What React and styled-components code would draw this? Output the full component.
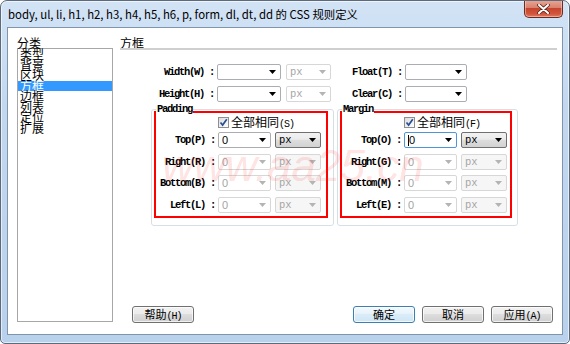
import React from "react";
import styled, { createGlobalStyle } from "styled-components";

const CJK = `"Noto Sans CJK SC", "Liberation Sans", sans-serif`;
const MONO = `"Liberation Mono", "Noto Sans CJK SC", monospace`;

const GlobalStyle = createGlobalStyle`
  html, body { margin: 0; padding: 0; background: #fff; }
  #root { width: 570px; height: 344px; }
`;

const categories = ["类型", "背景", "区块", "方框", "边框", "列表", "定位", "扩展"];

const Arrow = ({ off }) => (
  <svg width="7" height="4" viewBox="0 0 7 4" style={{ marginLeft: "auto", flex: "none" }}>
    <polygon points="0,0 7,0 3.5,4" fill={off ? "#b4b4b4" : "#000"} />
  </svg>
);

const Select = ({ w, ml, value, unit, off, btn, focus }) => (
  <Combo $w={w} $ml={ml} $off={off} $btn={btn} $focus={focus}>
    {focus && <Caret />}
    {unit ? <UnitText>{value}</UnitText> : <ValueText>{value}</ValueText>}
    <Arrow off={off} />
  </Combo>
);

const BoxGroup = ({ legend, hotkey, w, rows }) => (
  <Group $w={w}>
    <Legend>{legend}</Legend>
    <RedBox>
      <CheckRow>
        <CheckBox>
          <svg width="9" height="9" viewBox="0 0 9 9">
            <path d="M1.5 4.5 L3.6 7 L7.8 1.2" fill="none" stroke="#2a4f96" strokeWidth="1.7" />
          </svg>
        </CheckBox>
        <CheckText>
          全部相同<Mono>({hotkey})</Mono>
        </CheckText>
      </CheckRow>
      {rows.map((r, i) => (
        <BoxRow key={r}>
          <RowLabel>{r} :</RowLabel>
          <Select w={53} ml={3} value="0" off={i > 0} focus={i === 0 && legend === "Margin"} />
          <Select w={46} ml={4} value="px" unit btn off={i > 0} />
        </BoxRow>
      ))}
    </RedBox>
  </Group>
);

export default function App() {
  return (
    <>
      <GlobalStyle />
      <Window>
        <TitleBar>
          <Title>body, ul, li, h1, h2, h3, h4, h5, h6, p, form, dl, dt, dd 的 CSS 规则定义</Title>
          <CloseBtn>
            <svg width="13" height="10" viewBox="0 0 13 10">
              <path d="M2 1 L11 9 M11 1 L2 9" stroke="#5a2418" strokeWidth="3.6" strokeLinecap="round" />
              <path d="M2 1 L11 9 M11 1 L2 9" stroke="#fff" strokeWidth="2" strokeLinecap="round" />
            </svg>
          </CloseBtn>
        </TitleBar>
        <Client>
          <Sidebar>
            <SmallHead>分类</SmallHead>
            <List>
              {categories.map((c) => (
                <Item key={c} $active={c === "方框"}>{c}</Item>
              ))}
            </List>
          </Sidebar>
          <Panel>
            <SmallHead>方框</SmallHead>
            <Rule />
            <Form>
              <TopRow>
                <FieldLabel $w={64}>Width(W) :</FieldLabel>
                <Select w={64} ml={3} value="" />
                <Select w={45} ml={5} value="px" unit off />
                <FieldLabel $w={71}>Float(T) :</FieldLabel>
                <Select w={62} ml={3} value="" />
              </TopRow>
              <TopRow>
                <FieldLabel $w={64}>Height(H) :</FieldLabel>
                <Select w={64} ml={3} value="" />
                <Select w={45} ml={5} value="px" unit off />
                <FieldLabel $w={71}>Clear(C) :</FieldLabel>
                <Select w={62} ml={3} value="" />
              </TopRow>
              <Groups>
                <BoxGroup legend="Padding" hotkey="S" w={183} rows={["Top(P)", "Right(R)", "Bottom(B)", "Left(L)"]} />
                <BoxGroup legend="Margin" hotkey="F" w={181} rows={["Top(O)", "Right(G)", "Bottom(M)", "Left(E)"]} />
              </Groups>
            </Form>
            <ButtonBar>
              <Btn>帮助<Mono>(H)</Mono></Btn>
              <Spacer />
              <Btn $default>确定</Btn>
              <Btn>取消</Btn>
              <Btn>应用<Mono>(A)</Mono></Btn>
            </ButtonBar>
          </Panel>
          <Watermark>www.aa25.cn</Watermark>
        </Client>
      </Window>
    </>
  );
}

const Window = styled.div`
  box-sizing: border-box;
  width: 570px;
  height: 344px;
  display: flex;
  flex-direction: column;
  padding: 0 6px 8px;
  border: 1px solid #5d6a7c;
  border-radius: 7px 7px 5px 5px;
  background: linear-gradient(180deg, #d2e3f5 0%, #c3d8ef 30%, #b9d1eb 100%);
  box-shadow: inset 0 0 0 1px rgba(255, 255, 255, 0.6);
  overflow: hidden;
`;

const TitleBar = styled.div`
  height: 26px;
  flex: none;
  display: flex;
  align-items: center;
`;

const Title = styled.div`
  padding-left: 1px;
  font-family: ${CJK};
  font-size: 11.4px;
  color: #000;
  white-space: nowrap;
`;

const CloseBtn = styled.div`
  align-self: flex-start;
  margin-left: auto;
  margin-top: -1px;
  box-sizing: border-box;
  width: 39px;
  height: 18px;
  display: flex;
  align-items: center;
  justify-content: center;
  border: 1px solid #6a2c22;
  border-top: none;
  border-radius: 0 0 5px 5px;
  background: linear-gradient(180deg, #e9a99a 0%, #d9816c 45%, #c7452f 50%, #d0553d 80%, #e07a5e 100%);
  box-shadow: inset 0 0 0 1px rgba(255, 220, 210, 0.5);
`;

const Client = styled.div`
  position: relative;
  flex: 1;
  display: flex;
  background: #fff;
  border: 1px solid #8094ab;
  overflow: hidden;
`;

const Sidebar = styled.div`
  width: 96px;
  padding: 9px 0 0 9px;
  flex: none;
`;

const SmallHead = styled.div`
  font-family: ${CJK};
  font-size: 12px;
  line-height: 11px;
  height: 11px;
  color: #000;
`;

const List = styled.div`
  box-sizing: border-box;
  height: 274px;
  border: 1px solid #a7a7a7;
`;

const Item = styled.div`
  height: 10.5px;
  line-height: 10.5px;
  padding-left: 2px;
  font-family: ${CJK};
  font-size: 12px;
  color: ${(p) => (p.$active ? "#fff" : "#000")};
  background: ${(p) => (p.$active ? "#3399ff" : "transparent")};
  overflow: visible;
`;

const Panel = styled.div`
  width: 437px;
  margin-left: 7px;
  padding-top: 9px;
  display: flex;
  flex-direction: column;
`;

const Rule = styled.div`
  height: 2px;
  background: #cfcfcf;
`;

const Form = styled.div`
  padding: 14px 0 0 30px;
  display: flex;
  flex-direction: column;
  gap: 5.5px;
`;

const TopRow = styled.div`
  height: 16px;
  display: flex;
  align-items: center;
`;

const FieldLabel = styled.div`
  width: ${(p) => p.$w}px;
  flex: none;
  text-align: right;
  font-family: ${MONO};
  font-weight: bold;
  font-size: 10.5px;
  letter-spacing: -1.3px;
  color: #000;
  white-space: pre;
`;

const RowLabel = styled(FieldLabel)`
  width: 59px;
`;

const Combo = styled.div`
  box-sizing: border-box;
  width: ${(p) => p.$w}px;
  margin-left: ${(p) => p.$ml || 0}px;
  height: 16px;
  flex: none;
  display: flex;
  align-items: center;
  padding: 0 4px 0 3px;
  border: 1px solid
    ${(p) => (p.$focus ? "#4f95d9" : p.$off ? "#d7d7d7" : p.$btn ? "#707070" : "#abadb3")};
  border-radius: 2px;
  background: ${(p) =>
    p.$btn && !p.$off
      ? "linear-gradient(180deg, #f2f2f2 0%, #ebebeb 45%, #dddddd 50%, #d2d2d2 100%)"
      : p.$off && p.$btn
      ? "#f6f6f6"
      : "#fff"};
  color: ${(p) => (p.$off ? "#a5a5a5" : "#000")};
`;

const ValueText = styled.span`
  font-family: "Liberation Sans", sans-serif;
  font-size: 11px;
  line-height: 14px;
`;

const UnitText = styled.span`
  font-family: ${MONO};
  font-size: 10.5px;
  line-height: 14px;
`;

const Caret = styled.span`
  width: 1px;
  height: 11px;
  background: #000;
`;

const Groups = styled.div`
  display: flex;
  gap: 3px;
  margin: 2px 0 0 1px;
`;

const Group = styled.div`
  position: relative;
  box-sizing: border-box;
  width: ${(p) => p.$w}px;
  padding: 1px 5px 7px 2px;
  border: 1px solid #d5dfe5;
  border-radius: 3px;
`;

const Legend = styled.div`
  position: absolute;
  top: -6px;
  left: 4px;
  padding: 0 1px;
  background: #fff;
  font-family: ${MONO};
  font-weight: bold;
  font-size: 10.5px;
  line-height: 11px;
  letter-spacing: -1.3px;
  color: #000;
`;

const RedBox = styled.div`
  display: flex;
  flex-direction: column;
  gap: 5.5px;
  padding: 3px 0 3.5px;
  border: 2px solid #ff0000;
`;

const CheckRow = styled.div`
  height: 13px;
  margin-bottom: -2.5px;
  padding-left: 62px;
  display: flex;
  align-items: center;
  gap: 2px;
`;

const CheckBox = styled.div`
  box-sizing: border-box;
  width: 11px;
  height: 11px;
  display: flex;
  align-items: center;
  justify-content: center;
  border: 1px solid #8e8f8f;
  background: linear-gradient(135deg, #dcdcdc, #fff);
`;

const CheckText = styled.div`
  font-family: ${CJK};
  font-size: 12px;
  line-height: 13px;
  color: #000;
`;

const Mono = styled.span`
  font-family: ${MONO};
  font-size: 10px;
  letter-spacing: -1px;
`;

const BoxRow = styled.div`
  height: 16px;
  display: flex;
  align-items: center;
`;

const ButtonBar = styled.div`
  margin-top: auto;
  display: flex;
  align-items: center;
  gap: 7px;
  padding: 0 4px 11px 12px;
`;

const Spacer = styled.div`
  flex: 1;
`;

const Btn = styled.button`
  box-sizing: border-box;
  width: 62px;
  height: 17px;
  padding: 0;
  border: 1px solid ${(p) => (p.$default ? "#3c7fb1" : "#707070")};
  border-radius: 3px;
  background: ${(p) =>
    p.$default
      ? "linear-gradient(180deg, #f4fafd 0%, #e6f2fa 45%, #d9ecf8 50%, #cfe6f6 100%)"
      : "linear-gradient(180deg, #f2f2f2 0%, #ebebeb 45%, #dddddd 50%, #cfcfcf 100%)"};
  box-shadow: inset 0 0 0 1px rgba(255, 255, 255, 0.7);
  font-family: ${CJK};
  font-size: 11px;
  line-height: 15px;
  color: #000;
`;

const Watermark = styled.div`
  position: absolute;
  left: 154px;
  top: 116px;
  font-family: "Liberation Sans", sans-serif;
  font-style: italic;
  font-size: 44px;
  line-height: 1;
  color: rgba(255, 40, 40, 0.15);
  white-space: nowrap;
  pointer-events: none;
`;
